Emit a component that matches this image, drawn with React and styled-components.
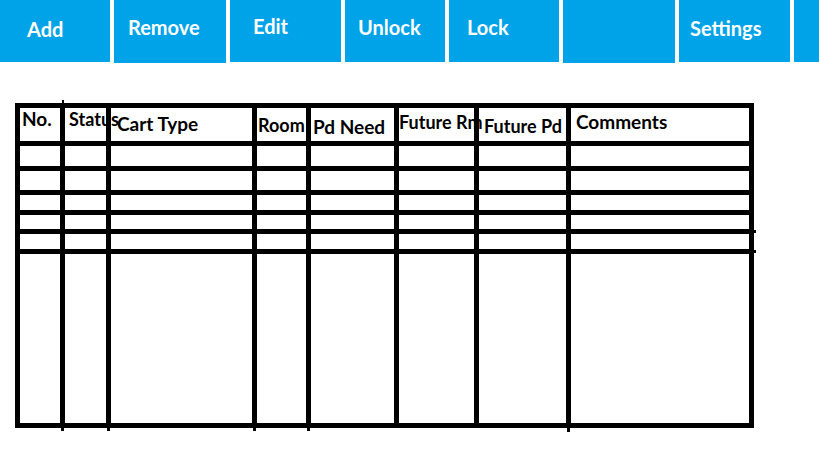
import React from 'react';
import styled, { createGlobalStyle } from 'styled-components';

const GlobalStyle = createGlobalStyle`
  html, body {
    margin: 0;
    padding: 0;
    background: #ffffff;
  }
  body {
    font-family: Lato, "Open Sans", sans-serif;
  }
`;

const buttons = [
  { label: 'Add', w: 110, h: 62, pt: 19, pl: 27 },
  { label: 'Remove', w: 112, h: 63, pt: 17, pl: 14 },
  { label: 'Edit', w: 111, h: 62, pt: 16, pl: 23 },
  { label: 'Unlock', w: 100, h: 62, pt: 17, pl: 13 },
  { label: 'Lock', w: 110, h: 62, pt: 17, pl: 18 },
  { label: '', w: 112, h: 63, pt: 17, pl: 0 },
  { label: 'Settings', w: 111, h: 62, pt: 18, pl: 11 },
  { label: '', w: 40, h: 62, pt: 17, pl: 0 }
];

// tick: how far the hand-drawn column line runs past the bottom edge
const headers = [
  { label: 'No.', w: 45, size: 19, pt: 1, pl: 2, tick: 3 },
  { label: 'Status', w: 46, size: 18, pt: 2, pl: 4, tick: 3 },
  { label: 'Cart Type', w: 146, size: 19, pt: 6, pl: 6, tick: 3 },
  { label: 'Room', w: 54, size: 18, pt: 8, pl: 1, tick: 3 },
  { label: 'Pd Need', w: 88, size: 19, pt: 9, pl: 2, tick: 0 },
  { label: 'Future Rm', w: 80, size: 18, pt: 5, pl: 0, tick: 0 },
  { label: 'Future Pd', w: 92, size: 18, pt: 9, pl: 5, tick: 4 },
  { label: 'Comments', w: 183, size: 19, pt: 4, pl: 5, tick: 0 }
];

// heights include the 5px line under each row; spur = line overshoot on the right
const rows = [
  { h: 25, spur: 0 },
  { h: 24, spur: 0 },
  { h: 20, spur: 0 },
  { h: 19, spur: 2 },
  { h: 20, spur: 2 },
  { h: 174, spur: 0 }
];

const App = () => {
  const last = rows.length - 1;
  return (
    <Page>
      <GlobalStyle />
      <Toolbar>
        {buttons.map((b, i) => (
          <ToolButton key={i} $w={b.w} $h={b.h} $pt={b.pt} $pl={b.pl}>{b.label}</ToolButton>
        ))}
      </Toolbar>

      <Grid>
        <colgroup>
          {headers.map(h => <Col key={h.label} $w={h.w} />)}
        </colgroup>
        <tbody>
          <Row $h={38}>
            {headers.map((h, c) => (
              <Cell key={h.label} $top={c === 0 ? 3 : 0}>
                <HeadLabel $size={h.size} $pt={h.pt} $pl={h.pl}>{h.label}</HeadLabel>
              </Cell>
            ))}
          </Row>
          {rows.map((row, r) => (
            <Row key={r} $h={row.h}>
              {headers.map((h, c) => (
                <Cell
                  key={h.label}
                  $tick={r === last ? h.tick : 0}
                  $spur={c === headers.length - 1 ? row.spur : 0}
                />
              ))}
            </Row>
          ))}
        </tbody>
      </Grid>
    </Page>
  );
};

const Page = styled.div`
  width: 819px;
  height: 460px;
  overflow: hidden;
  background: #ffffff;
`;

const Toolbar = styled.div`
  display: flex;
  align-items: flex-start;
  gap: 4px;
  height: 63px;
  overflow: hidden;
`;

const ToolButton = styled.div`
  flex: 0 0 auto;
  box-sizing: border-box;
  width: ${p => p.$w}px;
  height: ${p => p.$h}px;
  padding: ${p => p.$pt}px 0 0 ${p => p.$pl}px;
  background: #00a2e8;
  color: #ffffff;
  font-family: Lato, "Open Sans", sans-serif;
  font-weight: 700;
  font-size: 20px;
  line-height: 1;
  white-space: nowrap;
`;

const Grid = styled.table`
  isolation: isolate;
  box-sizing: border-box;
  width: 739px;
  margin: 40px 0 0 15px;
  table-layout: fixed;
  border-collapse: separate;
  border-spacing: 0;
  border-top: 5px solid #000000;
  border-left: 5px solid #000000;
  background: #ffffff;
`;

const Col = styled.col`
  width: ${p => p.$w}px;
`;

const Row = styled.tr`
  height: ${p => p.$h}px;
`;

const Cell = styled.td`
  position: relative;
  box-sizing: border-box;
  padding: 0;
  vertical-align: top;
  border-right: 5px solid #000000;
  border-bottom: 5px solid #000000;
  background: transparent;
  overflow: visible;

  &::after {
    content: '';
    display: ${p => (p.$tick ? 'block' : 'none')};
    position: absolute;
    right: -4px;
    bottom: -${p => p.$tick + 5}px;
    width: 3px;
    height: ${p => p.$tick}px;
    background: #000000;
  }

  &::before {
    content: '';
    display: ${p => (p.$spur || p.$top ? 'block' : 'none')};
    position: absolute;
    background: #000000;
    ${p => p.$spur && `
      right: -${p.$spur + 5}px;
      bottom: -4px;
      width: ${p.$spur}px;
      height: 3px;
    `}
    ${p => p.$top && `
      right: -4px;
      top: -${p.$top + 5}px;
      width: 2px;
      height: ${p.$top}px;
    `}
  }
`;

const HeadLabel = styled.div`
  position: relative;
  z-index: -1;
  padding: ${p => p.$pt}px 0 0 ${p => p.$pl}px;
  font-family: Lato, "Open Sans", sans-serif;
  font-weight: 700;
  font-size: ${p => p.$size}px;
  line-height: 1;
  color: #000000;
  white-space: nowrap;
`;

export default App;
